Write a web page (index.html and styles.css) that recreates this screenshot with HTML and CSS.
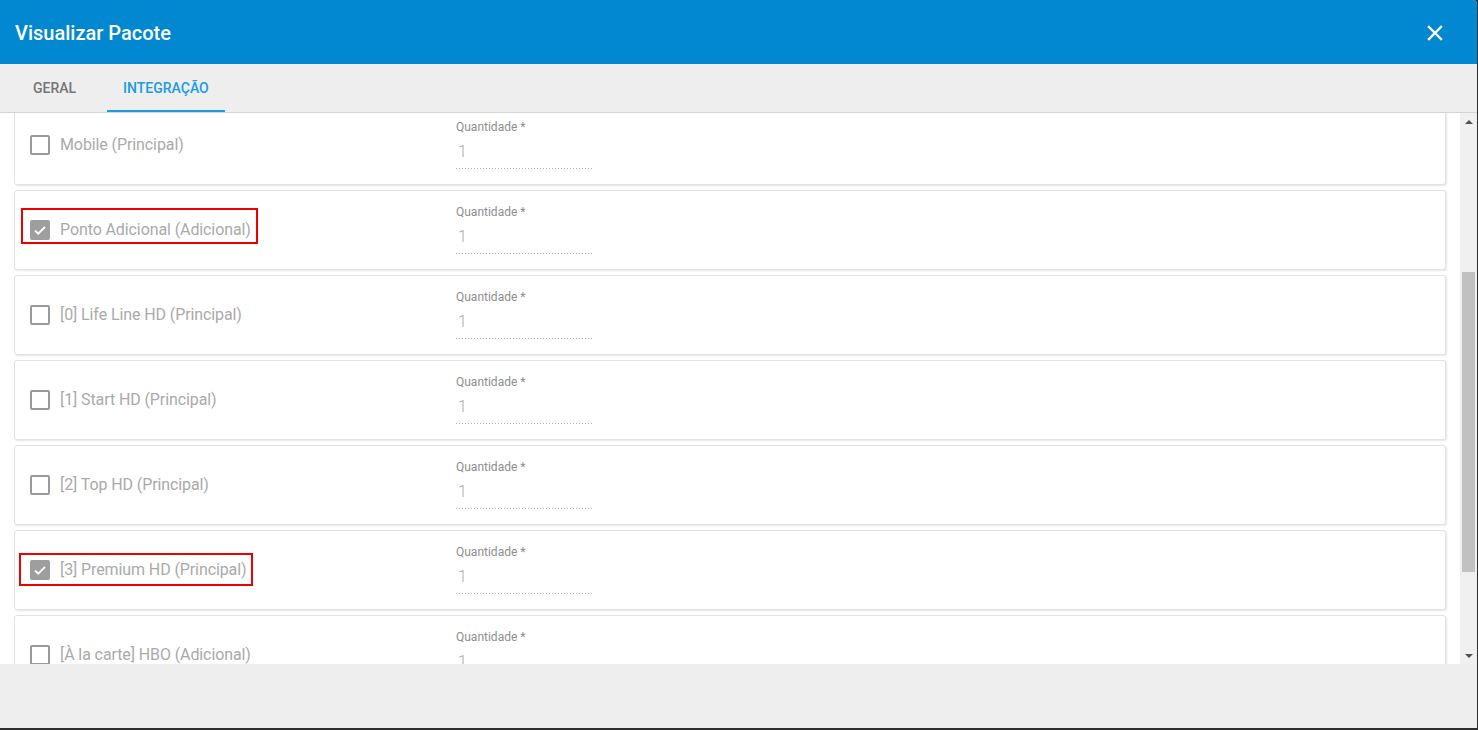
FILE: index.html
```html
<!DOCTYPE html>
<html lang="pt">
<head>
<meta charset="utf-8">
<title>Visualizar Pacote</title>
<link rel="stylesheet" href="styles.css">
</head>
<body>
<div class="dialog">
  <header class="dlg-header">
    <h1 class="dlg-title">Visualizar Pacote</h1>
    <button class="dlg-close" aria-label="Fechar">
      <svg width="16" height="16" viewBox="0 0 16 16"><path d="M2 2L14 14M14 2L2 14" stroke="#fff" stroke-width="2.4" stroke-linecap="square"/></svg>
    </button>
  </header>
  <nav class="tabs">
    <div class="tab">GERAL</div>
    <div class="tab active">INTEGRAÇÃO</div>
  </nav>
  <div class="body">
    <div class="viewport">
      <div class="list">
        <div class="card">
          <div class="check-col"><span class="check-group"><span class="cb"></span><span class="cb-label">Mobile (Principal)</span></span></div>
          <div class="field"><div class="f-label">Quantidade *</div><div class="f-value">1</div></div>
        </div>
        <div class="card">
          <div class="check-col"><span class="check-group mark mark-1"><span class="cb checked"><svg viewBox="0 0 20 20" width="20" height="20"><path d="M5 10.5l3.2 3.2L15 7" fill="none" stroke="#fff" stroke-width="1.8"/></svg></span><span class="cb-label">Ponto Adicional (Adicional)</span></span></div>
          <div class="field"><div class="f-label">Quantidade *</div><div class="f-value">1</div></div>
        </div>
        <div class="card">
          <div class="check-col"><span class="check-group"><span class="cb"></span><span class="cb-label">[0] Life Line HD (Principal)</span></span></div>
          <div class="field"><div class="f-label">Quantidade *</div><div class="f-value">1</div></div>
        </div>
        <div class="card">
          <div class="check-col"><span class="check-group"><span class="cb"></span><span class="cb-label">[1] Start HD (Principal)</span></span></div>
          <div class="field"><div class="f-label">Quantidade *</div><div class="f-value">1</div></div>
        </div>
        <div class="card">
          <div class="check-col"><span class="check-group"><span class="cb"></span><span class="cb-label">[2] Top HD (Principal)</span></span></div>
          <div class="field"><div class="f-label">Quantidade *</div><div class="f-value">1</div></div>
        </div>
        <div class="card">
          <div class="check-col"><span class="check-group mark mark-2"><span class="cb checked"><svg viewBox="0 0 20 20" width="20" height="20"><path d="M5 10.5l3.2 3.2L15 7" fill="none" stroke="#fff" stroke-width="1.8"/></svg></span><span class="cb-label">[3] Premium HD (Principal)</span></span></div>
          <div class="field"><div class="f-label">Quantidade *</div><div class="f-value">1</div></div>
        </div>
        <div class="card">
          <div class="check-col"><span class="check-group"><span class="cb"></span><span class="cb-label">[À la carte] HBO (Adicional)</span></span></div>
          <div class="field"><div class="f-label">Quantidade *</div><div class="f-value">1</div></div>
        </div>
        <div class="card">
          <div class="check-col"><span class="check-group"><span class="cb"></span><span class="cb-label">[À la carte] Telecine (Adicional)</span></span></div>
          <div class="field"><div class="f-label">Quantidade *</div><div class="f-value">1</div></div>
        </div>
      </div>
    </div>
    <div class="scrollbar">
      <div class="sb-btn"><span class="tri-up"></span></div>
      <div class="sb-track"><div class="sb-thumb"></div></div>
      <div class="sb-btn"><span class="tri-down"></span></div>
    </div>
  </div>
  <footer class="dlg-footer"></footer>
</div>
</body>
</html>
```
FILE: styles.css
```css
* { box-sizing: border-box; }
html, body { margin: 0; padding: 0; }
body {
  background: #2e2e2e;
  font-family: Roboto, "Noto Sans", "Liberation Sans", sans-serif;
  width: 1478px;
  height: 730px;
  overflow: hidden;
}
.dialog {
  width: 1477px;
  height: 728px;
  background: #eeeeee;
  display: flex;
  flex-direction: column;
  border-top-right-radius: 4px;
  overflow: hidden;
}
.dlg-header {
  height: 64px;
  flex: none;
  background: #0288d1;
  display: flex;
  align-items: center;
  justify-content: space-between;
  padding: 0 0 0 15px;
}
.dlg-title {
  margin: 0;
  color: #fff;
  font-size: 20px;
  font-weight: 500;
  line-height: 24px;
  margin-top: 2px;
}
.dlg-close {
  background: none;
  border: 0;
  padding: 0;
  width: 16px;
  height: 16px;
  margin-right: 34px;
  margin-top: 2px;
  display: flex;
}
.tabs {
  height: 49px;
  flex: none;
  display: flex;
  gap: 15px;
  padding-left: 17px;
  border-bottom: 1px solid #d4d4d4;
  background: #eeeeee;
}
.tab {
  padding: 0 16px;
  display: flex;
  align-items: center;
  font-size: 14px;
  font-weight: 500;
  color: #757575;
  border-bottom: 2px solid transparent;
  padding-top: 2px;
}
.tab.active {
  color: #1a9be3;
  border-bottom-color: #1a9be3;
}
.body {
  height: 551px;
  flex: none;
  display: flex;
  background: #fff;
}
.viewport {
  flex: 1;
  overflow: hidden;
  padding: 0 14px;
}
.list {
  margin-top: -8px;
  display: flex;
  flex-direction: column;
  gap: 5px;
}
.card {
  height: 80px;
  border: 1px solid #e2e2e2;
  border-radius: 3px;
  box-shadow: 1px 1px 2px rgba(0,0,0,0.10);
  display: flex;
  align-items: center;
  padding: 0 15px;
  background: #fff;
}
.check-col {
  width: 426px;
  flex: none;
  display: flex;
  align-items: center;
}
.check-group {
  display: inline-flex;
  align-items: center;
  gap: 10px;
  position: relative;
}
.cb {
  width: 20px;
  height: 20px;
  border: 2px solid #9a9a9a;
  border-radius: 2px;
  flex: none;
  display: flex;
}
.cb.checked {
  background: #9e9e9e;
  border-color: #9e9e9e;
}
.cb.checked svg { margin: -2px; }
.cb-label {
  font-size: 16px;
  line-height: 20px;
  color: #aaaaaa;
  white-space: nowrap;
  letter-spacing: -0.1px;
}
.mark::after {
  content: "";
  position: absolute;
  border: 2px solid #ee0000;
}
.mark-1::after { left: -9px; right: -7px; top: -12px; bottom: -4px; }
.mark-2::after { left: -11px; right: -7px; top: -7px; bottom: -6px; }
.field {
  align-self: flex-start;
  margin-top: 14px;
  width: 137px;
}
.f-label {
  font-size: 12px;
  line-height: 14px;
  color: #8e8e8e;
}
.f-value {
  margin-top: 8px;
  font-size: 16px;
  line-height: 20px;
  font-weight: 300;
  color: #aaaaaa;
  padding: 0 0 6px 2px;
  background-image: repeating-linear-gradient(to right, #b9b9b9 0 1px, transparent 1px 3px);
  background-size: 100% 1px;
  background-repeat: no-repeat;
  background-position: left bottom;
  height: 27px;
}
.scrollbar {
  width: 17px;
  flex: none;
  background: #f0f0f0;
  display: flex;
  flex-direction: column;
}
.sb-btn {
  height: 17px;
  flex: none;
  display: flex;
  align-items: center;
  justify-content: center;
}
.tri-up {
  width: 0; height: 0;
  border-left: 4px solid transparent;
  border-right: 4px solid transparent;
  border-bottom: 4px solid #505050;
}
.tri-down {
  width: 0; height: 0;
  border-left: 4px solid transparent;
  border-right: 4px solid transparent;
  border-top: 4px solid #505050;
}
.sb-track {
  flex: 1;
}
.sb-thumb {
  margin: 142px 2px 0 2px;
  height: 300px;
  background: #c1c1c1;
}
.dlg-footer {
  flex: 1;
  background: #eeeeee;
}
```
